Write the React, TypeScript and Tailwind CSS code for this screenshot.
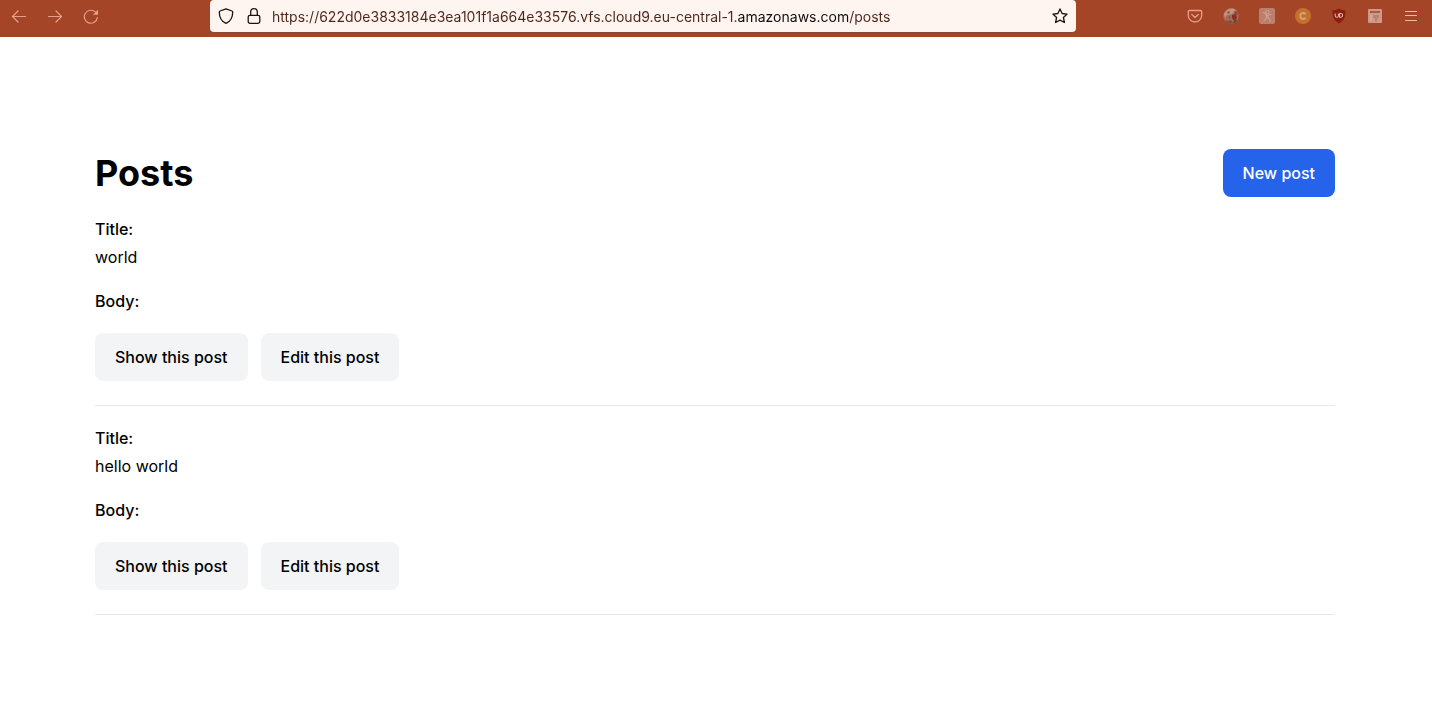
type Post = { id: number; title: string; body: string };

const posts: Post[] = [
    { id: 1, title: "world", body: "" },
    { id: 2, title: "hello world", body: "" },
];

const pageUrl = "https://622d0e3833184e3ea101f1a664e33576.vfs.cloud9.eu-central-1.amazonaws.com/posts";

function BackIcon() {
    return (
        <svg viewBox="0 0 16 16" className="size-4" fill="none" stroke="currentColor" strokeWidth="1.2" strokeLinecap="round" strokeLinejoin="round">
            <path d="M14.5 8.5H1.5M7 3L1.500 8.500 7 14" />
        </svg>
    );
}

function ForwardIcon() {
    return (
        <svg viewBox="0 0 16 16" className="size-4" fill="none" stroke="currentColor" strokeWidth="1.2" strokeLinecap="round" strokeLinejoin="round">
            <path d="M1.5 8.5h13M9 3l5.500 5.500L9 14" />
        </svg>
    );
}

function ReloadIcon() {
    return (
        <svg viewBox="0 0 16 16" className="size-4" fill="none" stroke="currentColor" strokeWidth="1.2" strokeLinecap="round">
            <path d="M14.3 9.5A6.500 6.500 0 1 1 12.500 4.200" />
            <path d="M15 1.800v5h-5z" fill="currentColor" stroke="none" />
        </svg>
    );
}

function ShieldIcon() {
    return (
        <svg viewBox="0 0 16 16" className="size-4 shrink-0" fill="none" stroke="currentColor" strokeWidth="1.3" strokeLinejoin="round">
            <path d="M8 .8 14 3Q14.700 3.300 14.700 4C14.700 9 12.500 13.500 8 15.400 3.500 13.500 1.300 9 1.300 4Q1.300 3.300 2 3Z" />
        </svg>
    );
}

function LockIcon() {
    return (
        <svg viewBox="0 0 16 16" className="size-4 shrink-0" fill="none" stroke="currentColor" strokeWidth="1.3">
            <rect x="2.2" y="7.3" width="11.6" height="8" rx="1.8" />
            <path d="M4.700 7.300V4a3.300 3.300 0 0 1 6.600 0v3.300" />
        </svg>
    );
}

function StarIcon() {
    return (
        <svg viewBox="0 0 16 16" className="size-4" fill="none" stroke="currentColor" strokeWidth="1.3" strokeLinejoin="round">
            <path d="M8 .9l2.100 4.600 5 .6-3.700 3.400 1 5L8 12.100l-4.400 2.400 1-5L.9 6.100l5-.6z" />
        </svg>
    );
}

function PocketIcon() {
    return (
        <svg viewBox="0 0 16 16" className="size-4" fill="none" stroke="currentColor" strokeWidth="1.3" strokeLinecap="round" strokeLinejoin="round">
            <path d="M2.500 2.500h11q1.200 0 1.200 1.200V7.500a6.700 6.500 0 0 1-13.400 0V3.700q0-1.200 1.200-1.200z" />
            <path d="M4.800 6.500 8 9.500l3.200-3" />
        </svg>
    );
}

function AvatarIcon() {
    return (
        <svg viewBox="0 0 16 16" className="size-4">
            <circle cx="8" cy="8" r="7.8" fill="#a66a5b" />
            <path d="M1 6C3 1 9-1 13 2L11 4 9 6 4 7 2 10z" fill="#c4917f" />
            <path d="M4 4l2-1 1 2-2 1zM5 9l2-1 1 2-2 1z" fill="#93574a" />
            <path d="M9 7l4-1 1 4-3 3-2-3z" fill="#8a2d1c" />
            <path d="M2 12l3 1 3-1 2 3-3 .8-3-1z" fill="#7d5044" />
            <path d="M11 3l3 1 1 3-3-1z" fill="#7d4b3f" />
            <path d="M11 13l3-2-1 3-3 1.500z" fill="#663d31" />
        </svg>
    );
}

function RunnerIcon() {
    return (
        <svg viewBox="0 0 16 16" className="size-4">
            <rect width="16" height="16" rx="2" fill="#bb7f6e" />
            <circle cx="8.5" cy="4.2" r="1.7" fill="none" stroke="#d2a193" strokeWidth="1" />
            <path d="M4.500 4.500 7.500 7v3L5 13M7.500 7.500l4.500-1M9 7.500V10l2 1.500V13.500" fill="none" stroke="#d2a193" strokeWidth="1.1" strokeLinecap="round" strokeLinejoin="round" />
        </svg>
    );
}

function CoinIcon() {
    return (
        <svg viewBox="0 0 16 16" className="size-4">
            <circle cx="8" cy="8" r="8" fill="#c5702f" />
            <path d="M10.600 6.200a3 3 0 1 0 0 3.600" fill="none" stroke="#dda078" strokeWidth="1.8" />
        </svg>
    );
}

function BlockerIcon() {
    return (
        <svg viewBox="0 0 16 16" className="size-4">
            <path d="M8 .5Q11 2.500 14.500 2.500C14.500 9 13.500 12.500 8 15.500 2.500 12.500 1.500 9 1.500 2.500Q5 2.500 8 .5z" fill="#8c1d12" />
            <path d="M4.200 5.500v2.200a1.600 1.600 0 0 0 3.200 0V5.500M8.600 5.500v3.700h1.200a1.850 1.850 0 0 0 0-3.700z" fill="none" stroke="#dfb0a5" strokeWidth="1.1" />
        </svg>
    );
}

function ReaderIcon() {
    return (
        <svg viewBox="0 0 16 16" className="size-4">
            <rect x="1" y="1" width="14" height="14" rx="1" fill="#cc998b" />
            <rect x="3" y="3" width="10" height="2" fill="#ad5a45" />
            <path d="M6 7h6v2.500L10 11v2.500H8V11L6 9.500z" fill="#bd7f6f" />
            <path d="M3 7h2v6H3z" fill="#d6a79b" />
        </svg>
    );
}

function MenuIcon() {
    return (
        <svg viewBox="0 0 16 16" className="size-4" stroke="currentColor" strokeLinecap="round">
            <path d="M2.500 3.500h11M2.500 7.500h11M2.500 12.500h11" />
        </svg>
    );
}

const extensions = [
    { label: "Save to Pocket", Icon: PocketIcon },
    { label: "Account", Icon: AvatarIcon },
    { label: "Runner", Icon: RunnerIcon },
    { label: "Coin", Icon: CoinIcon },
    { label: "Blocker", Icon: BlockerIcon },
    { label: "Reader", Icon: ReaderIcon },
];

function Toolbar() {
    return (
        <header className="flex h-[37px] items-start bg-[#a44528] text-[#e6a08c]">
            <div className="flex h-8 items-center gap-5 pl-[11px]">
                <button aria-label="Back"><BackIcon /></button>
                <button aria-label="Forward"><ForwardIcon /></button>
                <button aria-label="Reload"><ReloadIcon /></button>
            </div>
            <div className="mx-[111px] flex h-8 min-w-0 flex-1 items-center rounded bg-[#fef4f0] px-2 text-[#1c1412] shadow-[0_1px_1px_#8a4a38]">
                <div className="flex shrink-0 items-center gap-3">
                    <ShieldIcon />
                    <LockIcon />
                </div>
                {/* the gradient stops darken the registrable domain */}
                <input
                    aria-label="Address"
                    type="text"
                    defaultValue={pageUrl}
                    spellCheck={false}
                    className="mx-2.5 min-w-0 flex-1 bg-[linear-gradient(to_right,#4d2519_465px,#100c0c_465px,#100c0c_576px,#4d2519_576px)] bg-clip-text pt-0.5 text-sm text-transparent caret-black outline-none"
                />
                <button aria-label="Bookmark this page"><StarIcon /></button>
            </div>
            <div className="flex h-8 items-center gap-5 pr-[13px]">
                {extensions.map(({ label, Icon }) => (
                    <button key={label} aria-label={label}><Icon /></button>
                ))}
                <button aria-label="Open menu" className="text-[#efb8a8]"><MenuIcon /></button>
            </div>
        </header>
    );
}

function PostItem({ post }: { post: Post }) {
    return (
        <article>
            <div className="my-5">
                <strong className="mb-1 block font-medium">Title:</strong>
                {post.title}
            </div>
            <div className="my-5">
                <strong className="mb-1 block font-medium">Body:</strong>
                {post.body}
            </div>
            <div className="flex gap-[13px]">
                <a href={`#/posts/${post.id}`} className="rounded-lg bg-gray-100 px-5 py-3 font-medium">
                    Show this post
                </a>
                <a href={`#/posts/${post.id}/edit`} className="rounded-lg bg-gray-100 px-5 py-3 font-medium">
                    Edit this post
                </a>
            </div>
            <hr className="mt-6 border-gray-200" />
        </article>
    );
}

export default function App() {
    return (
        <div className="min-h-screen bg-white font-['Inter',sans-serif] text-black">
            <Toolbar />
            <div className="pr-0.5">
                <main className="container mx-auto mt-28 px-5">
                    <div className="flex items-center justify-between">
                        <h1 className="text-4xl font-bold">Posts</h1>
                        <a href="#/posts/new" className="block rounded-lg bg-[#2563eb] px-5 py-3 font-medium text-white">
                            New post
                        </a>
                    </div>
                    {posts.map((post) => (
                        <PostItem key={post.id} post={post} />
                    ))}
                </main>
            </div>
        </div>
    );
}
